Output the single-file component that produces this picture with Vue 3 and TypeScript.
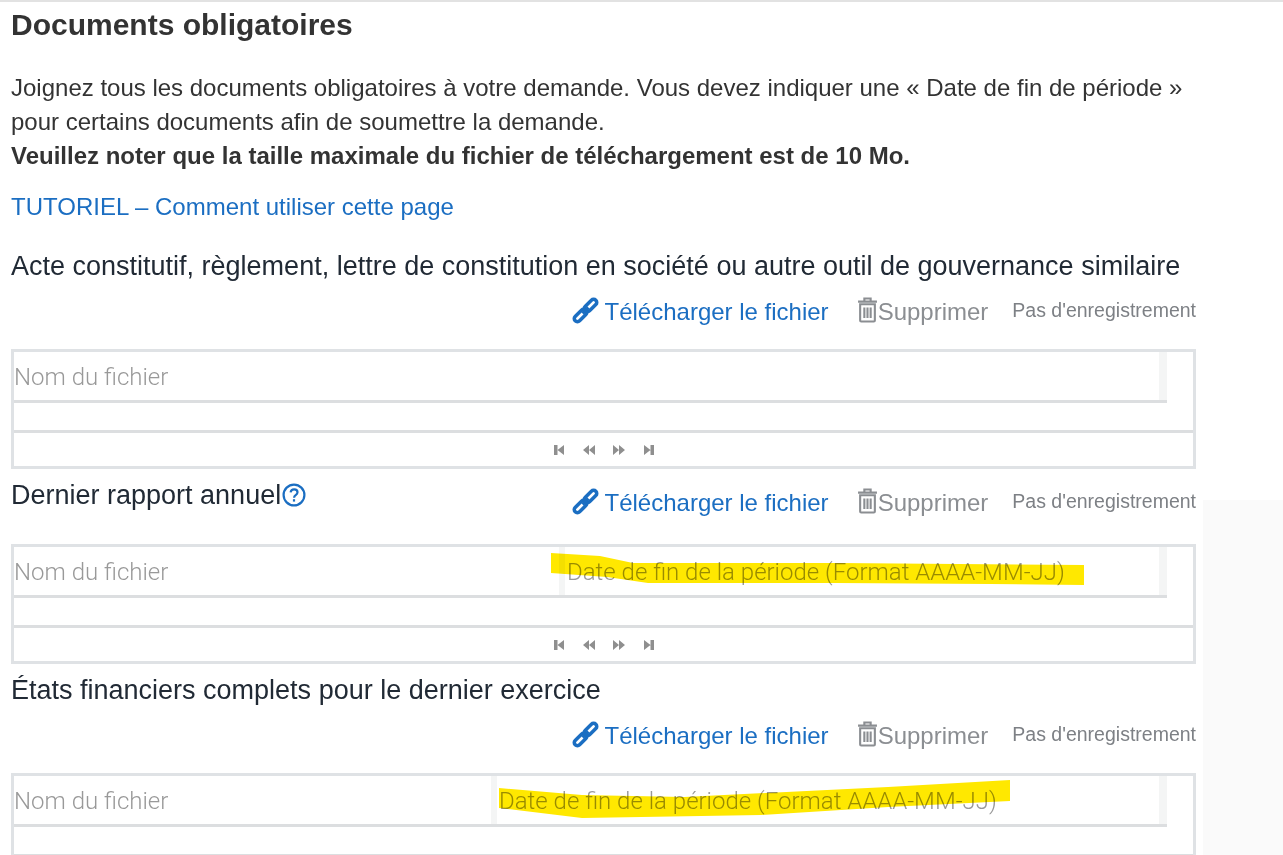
<template>
  <div class="page">
    <div class="side-panel"></div>
    <h2 class="heading">Documents obligatoires</h2>
    <p class="intro">
      Joignez tous les documents obligatoires à votre demande. Vous devez indiquer une « Date de fin de période »
      pour certains documents afin de soumettre la demande.<br />
      <strong>Veuillez noter que la taille maximale du fichier de téléchargement est de 10 Mo.</strong>
    </p>
    <a class="tutorial" href="#">TUTORIEL – Comment utiliser cette page</a>

    <section v-for="doc in docs" :key="doc.title" class="doc" :class="`doc--${doc.id}`">
      <div class="doc__head">
        <h3 class="doc__title">
          {{ doc.title }}
          <svg v-if="doc.help" class="help" viewBox="0 0 24 24" aria-hidden="true">
            <circle cx="12" cy="12" r="10.4" />
            <path d="M8.6 9.4c.3-2 1.7-3 3.5-3 2 0 3.4 1.2 3.4 2.9 0 1.4-.8 2.1-1.8 2.8-1 .7-1.6 1.2-1.6 2.6" />
            <path d="M12 16.2v2.4" />
          </svg>
        </h3>
        <div class="actions">
          <a class="actions__upload" href="#">
            <svg class="icon-link" viewBox="0 0 24 24" aria-hidden="true">
              <g transform="rotate(-45 12 12)">
                <rect x="-2" y="9" width="14.5" height="6" rx="3" />
                <rect x="11.5" y="9" width="14.5" height="6" rx="3" />
                <path d="M8 12h8" />
              </g>
            </svg>
            Télécharger le fichier
          </a>
          <span class="actions__delete">
            <svg class="icon-trash" viewBox="0 0 20 24" aria-hidden="true">
              <path d="M7 3V1h6v2M1 4h18" />
              <path d="M3 6.5h14V22a1 1 0 0 1-1 1H4a1 1 0 0 1-1-1z" />
              <path d="M7 9.5v10M10 9.5v10M13 9.5v10" />
            </svg>
            Supprimer
          </span>
          <span class="actions__status">Pas d'enregistrement</span>
        </div>
      </div>

      <div class="grid">
        <div class="grid__header">
          <div class="grid__cols" :style="{ gridTemplateColumns: doc.columns }">
            <div class="grid__col">Nom du fichier</div>
            <div v-if="doc.columns" class="grid__col grid__col--date">Date de fin de la période (Format AAAA-MM-JJ)</div>
          </div>
          <div class="grid__scroll"></div>
        </div>
        <div class="grid__body"></div>
        <div class="grid__pager">
          <svg v-for="arrow in pager" :key="arrow" class="pager-icon" viewBox="0 0 12 12" aria-hidden="true">
            <path :d="arrow" />
          </svg>
        </div>
        <svg v-if="doc.marker" class="marker" aria-hidden="true">
          <polygon :points="doc.marker" />
        </svg>
      </div>
    </section>
  </div>
</template>

<script setup lang="ts">
type Doc = {
  id: string;
  title: string;
  help?: boolean;
  columns?: string;
  marker?: string;
};

const pager = [
  'M1 1h3.5v10H1zM4.5 6 11 1v10z',
  'M0 6l6-5v10zM6 6l6-5v10z',
  'M0 1l6 5-6 5zM6 1l6 5-6 5z',
  'M7.5 1H11v10H7.5zM7.5 6 1 1v10z',
];

const docs: Doc[] = [
  {
    id: 'charter',
    title: 'Acte constitutif, règlement, lettre de constitution en société ou autre outil de gouvernance similaire',
  },
  {
    id: 'report',
    title: 'Dernier rapport annuel',
    help: true,
    columns: '545px 1fr',
    marker: '540,9 589,12 622,19 826,19 1073,21 1073,41 979,40 826,39 637,39 596,33 540,29',
  },
  {
    id: 'finance',
    title: 'États financiers complets pour le dernier exercice',
    columns: '477px 1fr',
    marker: '488,15 571,22 673,24 755,20 877,14 999,7 999,28 877,34 750,42 571,45 488,35',
  },
];
</script>

<style scoped>
.page {
  position: relative;
  box-sizing: border-box;
  width: 1283px;
  height: 855px;
  overflow: hidden;
  padding: 0 87px 0 11px;
  border-top: 2px solid #e2e2e2;
  background: #fff;
  color: #2c2c2c;
  font-family: "Liberation Sans", Arial, sans-serif;
}

.side-panel {
  position: absolute;
  top: 498px;
  right: 0;
  bottom: 0;
  width: 80px;
  background: #fafafa;
}

.heading {
  margin: 7px 0 0;
  font-size: 30px;
  line-height: 32px;
  font-weight: 700;
  color: #333;
}

.intro {
  margin: 30px 0 0;
  font-size: 24px;
  line-height: 34px;
  color: #333;
}

.tutorial {
  display: block;
  margin-top: 18px;
  color: #1b6ec2;
  font-size: 24px;
  line-height: 32px;
  text-decoration: none;
}

.doc {
  position: relative;
}

.doc__title {
  margin: 0;
  font-size: 27px;
  line-height: 32px;
  font-weight: 400;
  color: #212a35;
}

.doc--charter {
  margin-top: 27px;
}

.doc--report {
  margin-top: 10px;
}

.doc--report .doc__head {
  display: flex;
  justify-content: space-between;
  align-items: flex-start;
}

.doc--finance {
  margin-top: 10px;
}

.help {
  display: inline-block;
  width: 24px;
  height: 24px;
  margin-left: -7px;
  vertical-align: -3px;
  fill: none;
  stroke: #1b6ec2;
  stroke-width: 2.2;
}

.actions {
  display: flex;
  justify-content: flex-end;
  align-items: center;
  height: 36px;
  margin-top: 12px;
  font-size: 24px;
}

.doc--report .actions {
  margin-top: 6px;
  margin-left: auto;
}

.actions__upload {
  display: flex;
  align-items: center;
  gap: 7px;
  color: #1b6ec2;
  text-decoration: none;
}

.icon-link {
  width: 25px;
  height: 25px;
  margin-top: -4px;
  overflow: visible;
  fill: none;
  stroke: #1b6ec2;
  stroke-width: 3.4;
}

.actions__delete {
  display: flex;
  align-items: center;
  margin-left: 28px;
  color: #8b8e92;
}

.icon-trash {
  width: 21px;
  height: 26px;
  margin-top: -5px;
  fill: none;
  stroke: #8b8e92;
  stroke-width: 2;
}

.actions__status {
  margin-left: 24px;
  margin-top: -4px;
  color: #7d8085;
  font-size: 19.5px;
}

.grid {
  position: relative;
  height: 120px;
  margin-top: 19px;
  box-sizing: border-box;
  display: flex;
  flex-direction: column;
  border: 3px solid #dfe2e5;
}

.doc--report .grid {
  margin-top: 23px;
}

.grid__header {
  display: flex;
  flex: none;
  width: 1153px;
  height: 51px;
  box-sizing: border-box;
  border-bottom: 3px solid #dcdee0;
}

.grid__cols {
  flex: 1;
  display: grid;
  min-width: 0;
}

.grid__col {
  padding-top: 2px;
  color: #999;
  font-family: Roboto, "Liberation Sans", sans-serif;
  font-size: 24px;
  font-weight: 300;
  line-height: 46px;
  white-space: nowrap;
}

.grid__col--date {
  padding-left: 2px;
  border-left: 6px solid #f4f5f5;
}

.grid__scroll {
  flex: none;
  width: 8px;
  background: #f4f5f5;
}

.grid__body {
  flex: none;
  height: 27px;
}

.grid__pager {
  flex: 1;
  display: flex;
  justify-content: center;
  align-items: center;
  gap: 18px;
  border-top: 3px solid #dcdee0;
}

.pager-icon {
  width: 12px;
  height: 12px;
  fill: #8f8f8f;
  filter: blur(0.7px);
}

.marker {
  position: absolute;
  top: -3px;
  left: -3px;
  width: 100%;
  height: 100%;
  overflow: visible;
  mix-blend-mode: multiply;
  pointer-events: none;
}

.marker polygon {
  fill: #ffe800;
}
</style>

<style>
html,
body {
  margin: 0;
  overflow: hidden;
}
</style>
